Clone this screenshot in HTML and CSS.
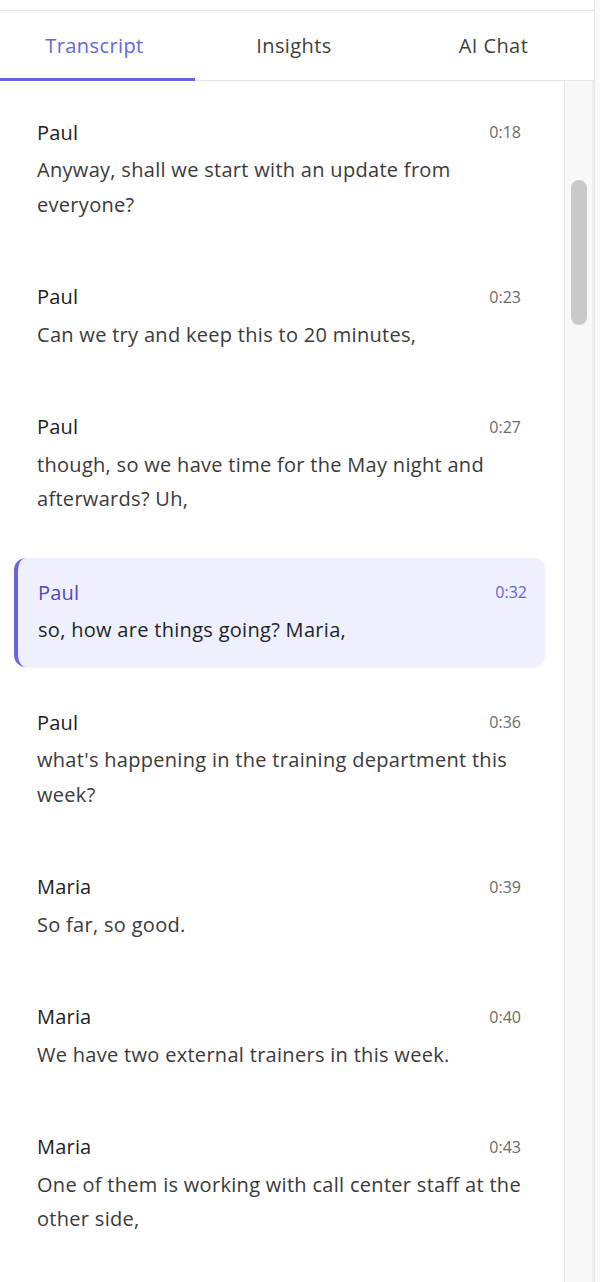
FILE: index.html
```html
<!DOCTYPE html>
<html lang="en">
<head>
<meta charset="utf-8">
<title>Transcript</title>
<link rel="stylesheet" href="styles.css">
</head>
<body>
<div class="panel">
  <div class="topbar"></div>
  <nav class="tabs">
    <div class="tab active">Transcript</div>
    <div class="tab">Insights</div>
    <div class="tab">AI Chat</div>
  </nav>
  <div class="content">
    <div class="list">
      <div class="item">
        <div class="head"><span class="name">Paul</span><span class="time">0:18</span></div>
        <p class="text">Anyway, shall we start with an update from everyone?</p>
      </div>
      <div class="item">
        <div class="head"><span class="name">Paul</span><span class="time">0:23</span></div>
        <p class="text">Can we try and keep this to 20 minutes,</p>
      </div>
      <div class="item">
        <div class="head"><span class="name">Paul</span><span class="time">0:27</span></div>
        <p class="text">though, so we have time for the May night and afterwards? Uh,</p>
      </div>
      <div class="item current">
        <div class="head"><span class="name">Paul</span><span class="time">0:32</span></div>
        <p class="text">so, how are things going? Maria,</p>
      </div>
      <div class="item">
        <div class="head"><span class="name">Paul</span><span class="time">0:36</span></div>
        <p class="text">what's happening in the training department this week?</p>
      </div>
      <div class="item">
        <div class="head"><span class="name">Maria</span><span class="time">0:39</span></div>
        <p class="text">So far, so good.</p>
      </div>
      <div class="item">
        <div class="head"><span class="name">Maria</span><span class="time">0:40</span></div>
        <p class="text">We have two external trainers in this week.</p>
      </div>
      <div class="item">
        <div class="head"><span class="name">Maria</span><span class="time">0:43</span></div>
        <p class="text">One of them is working with call center staff at the other side,</p>
      </div>
    </div>
    <div class="scrollbar"><div class="thumb"></div></div>
  </div>
</div>
</body>
</html>
```

FILE: styles.css
```css
html, body {
  margin: 0;
  padding: 0;
}
body {
  background: #f9f9f9;
  font-family: "Open Sans", "Noto Sans", sans-serif;
  height: 1282px;
  overflow: hidden;
}
.panel {
  width: 594px;
  height: 1282px;
  background: #ffffff;
  border-right: 1px solid #e6e6e6;
  display: flex;
  flex-direction: column;
}
.topbar {
  height: 10px;
  border-bottom: 1px solid #e6e6e6;
  flex: none;
}
.tabs {
  height: 69px;
  border-bottom: 1px solid #e4e4e4;
  display: grid;
  grid-template-columns: 195px 198px 1fr;
  flex: none;
}
.tab {
  display: flex;
  align-items: center;
  justify-content: center;
  font-size: 20px;
  letter-spacing: 0.4px;
  color: #3f3f3f;
  position: relative;
  padding-bottom: 1px;
}
.tab.active {
  color: #6466dc;
  padding-right: 6px;
}
.tab.active::after {
  content: "";
  position: absolute;
  left: 0;
  right: 0;
  bottom: -1px;
  height: 3px;
  background: #6466dc;
}
.content {
  flex: 1;
  display: flex;
  min-height: 0;
}
.list {
  flex: 1;
  padding: 17px 0 0 14px;
  display: flex;
  flex-direction: column;
  gap: 21.5px;
  overflow: hidden;
}
.item {
  width: 531px;
  box-sizing: border-box;
  border-left: 4px solid transparent;
  border-radius: 12px;
  padding: 20px 24px 19px 19px;
}
.head {
  display: flex;
  justify-content: space-between;
  align-items: center;
  height: 28px;
}
.name {
  font-size: 20px;
  font-weight: 500;
  letter-spacing: 0.2px;
  color: #1c1c1c;
}
.time {
  font-size: 16px;
  color: #6a6a6a;
}
.text {
  margin: 7px 0 0;
  font-size: 20px;
  letter-spacing: 0.3px;
  line-height: 34.5px;
  color: #3a3a3a;
}
.item.current {
  background: #eef1fd;
  border-left-color: #6466e4;
  padding-right: 18px;
  padding-left: 20px;
  margin-top: 1px;
  box-shadow: 0 1px 3px rgba(90, 95, 200, 0.08);
}
.item.current .name {
  color: #4b47c6;
}
.item.current .time {
  color: #6062dc;
}
.item.current .text {
  color: #1e1f2b;
}
.scrollbar {
  width: 27px;
  flex: none;
  background: #f8f8f8;
  border-left: 1px solid #e8e8e8;
  border-right: 2px solid #eeeeee;
  padding-top: 99px;
  box-sizing: content-box;
}
.thumb {
  width: 16px;
  height: 145px;
  margin-left: 6px;
  border-radius: 8px;
  background: #c9c9c9;
}
```
